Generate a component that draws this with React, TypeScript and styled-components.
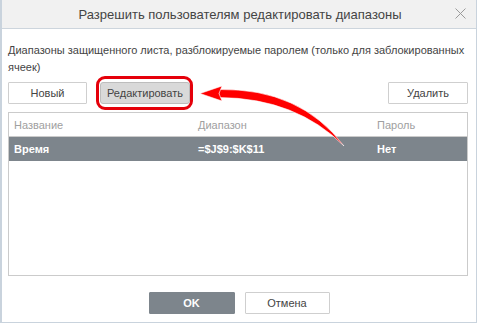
import React from "react";
import styled, { createGlobalStyle } from "styled-components";

const Global = createGlobalStyle`
  html, body { margin: 0; padding: 0; background: #fff; }
  body { font-family: "Liberation Sans", Arial, sans-serif; }
`;

const Dialog = styled.div`
  position: relative;
  box-sizing: border-box;
  width: 477px;
  height: 323px;
  border: 1px solid #c9d3dd;
  border-left-width: 2px;
  border-top: none;
  background: #fff;
  display: flex;
  flex-direction: column;
  color: #444;
  font-size: 11px;
`;

const Header = styled.div`
  height: 29px;
  box-sizing: border-box;
  background: #f1f1f1;
  border-bottom: 1px solid #cdd5dd;
  display: flex;
  align-items: center;
  justify-content: center;
  position: relative;
  font-size: 13px;
  color: #444;
  padding-left: 2px;
`;

const Close = styled.svg`
  position: absolute;
  right: 10px;
  top: 8px;
`;

const Body = styled.div`
  flex: 1;
  padding: 13px 8px 0 6px;
  display: flex;
  flex-direction: column;
`;

const Description = styled.div`
  line-height: 17px;
  color: #444;
`;

const ButtonRow = styled.div`
  display: flex;
  align-items: center;
  height: 34px;
  gap: 9px;
`;

const Button = styled.button<{ $w: number; $active?: boolean; $primary?: boolean }>`
  box-sizing: border-box;
  width: ${(p) => p.$w}px;
  height: 22px;
  border: 1px solid ${(p) => (p.$primary ? "#7d858c" : p.$active ? "#bdbdbd" : "#cfcfcf")};
  border-radius: ${(p) => (p.$active ? "3px" : "1px")};
  background: ${(p) => (p.$primary ? "#7d858c" : p.$active ? "#d9d9d9" : "#fff")};
  color: ${(p) => (p.$primary ? "#fff" : "#444")};
  font-family: "Liberation Sans", Arial, sans-serif;
  font-size: 11px;
  font-weight: ${(p) => (p.$primary ? 700 : 400)};
  padding: 0;
  cursor: pointer;
`;

const Highlight = styled.div`
  box-sizing: border-box;
  height: 34px;
  border: 3px solid #e5000a;
  border-radius: 9px;
  padding: 3px 0 3px 1px;
  display: flex;
  align-items: center;
`;

const Spacer = styled.div`
  flex: 1;
`;

const Table = styled.div`
  margin-top: 2px;
  box-sizing: border-box;
  height: 164px;
  border: 1px solid #cbcbcb;
  display: flex;
  flex-direction: column;
`;

const Row = styled.div<{ $head?: boolean; $selected?: boolean }>`
  display: grid;
  grid-template-columns: 184px 179px 1fr;
  height: ${(p) => (p.$head ? "23px" : "24px")};
  align-items: center;
  border-bottom: ${(p) => (p.$head ? "1px solid #cbcbcb" : "none")};
  background: ${(p) => (p.$selected ? "#7d858c" : "transparent")};
  color: ${(p) => (p.$head ? "#a0a0a0" : p.$selected ? "#fff" : "#444")};
  font-weight: ${(p) => (p.$selected ? 700 : 400)};
`;

const Cell = styled.div`
  padding-left: 5px;
  white-space: nowrap;
`;

const Footer = styled.div`
  padding-top: 16px;
  display: flex;
  justify-content: center;
  align-items: flex-start;
  gap: 10px;
  padding-left: 2px;
`;

const Overlay = styled.svg`
  position: absolute;
  left: -2px;
  top: 0;
  pointer-events: none;
`;

export default function App() {
  return (
    <>
      <Global />
      <Dialog>
        <Header>
          Разрешить пользователям редактировать диапазоны
          <Close width="11" height="11" viewBox="0 0 11 11">
            <path d="M0.5 0.5 L10.5 10.5 M10.5 0.5 L0.5 10.5" stroke="#9a9a9a" strokeWidth="1" fill="none" />
          </Close>
        </Header>
        <Body>
          <Description>
            Диапазоны защищенного листа, разблокируемые паролем (только для заблокированных ячеек)
          </Description>
          <ButtonRow>
            <Button $w={79}>Новый</Button>
            <Highlight>
              <Button $w={90} $active>
                Редактировать
              </Button>
            </Highlight>
            <Spacer />
            <Button $w={80}>Удалить</Button>
          </ButtonRow>
          <Table>
            <Row $head>
              <Cell>Название</Cell>
              <Cell>Диапазон</Cell>
              <Cell>Пароль</Cell>
            </Row>
            <Row $selected>
              <Cell>Время</Cell>
              <Cell>=$J$9:$K$11</Cell>
              <Cell>Нет</Cell>
            </Row>
          </Table>
          <Footer>
            <Button $w={86} $primary>
              OK
            </Button>
            <Button $w={85}>Отмена</Button>
          </Footer>
        </Body>
        <Overlay width="477" height="324" viewBox="0 0 477 324">
          <path
            d="M219 89.5 Q300 88 344 146 Q296 98 219 97.5 Z"
            fill="#f00"
            stroke="#fff"
            strokeWidth="0.6"
          />
          <path d="M200 93.5 L222 86 L219 93.5 L222 101 Z" fill="#f00" stroke="#fff" strokeWidth="0.6" />
        </Overlay>
      </Dialog>
    </>
  );
}
